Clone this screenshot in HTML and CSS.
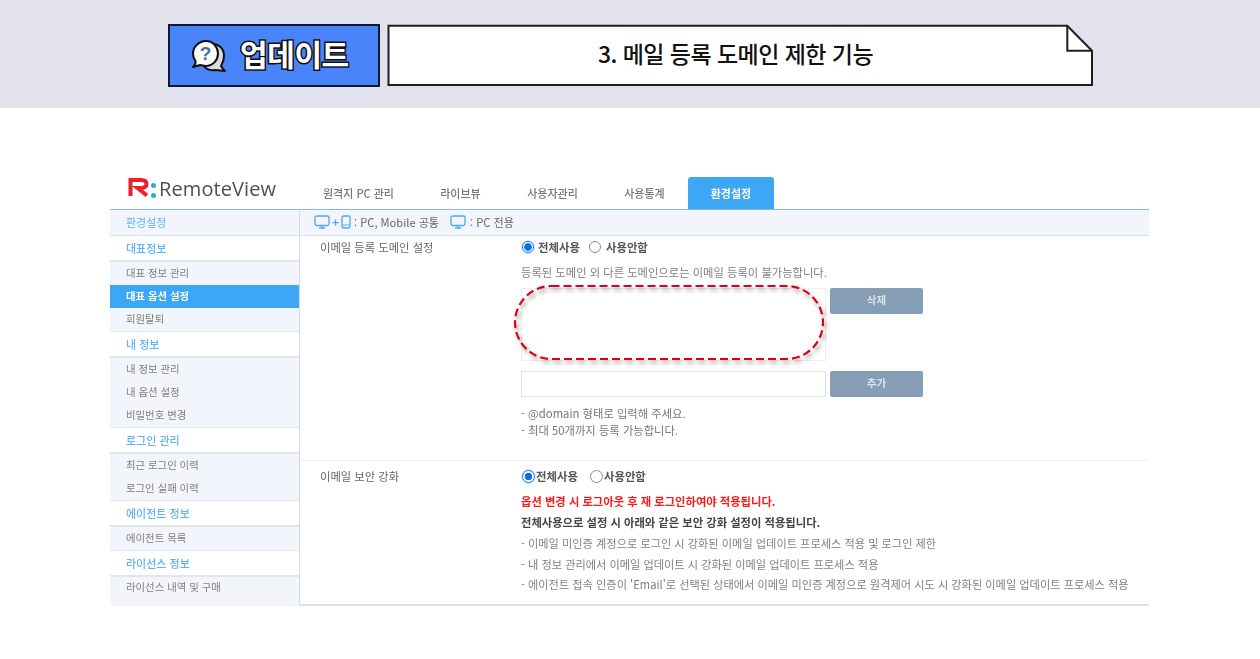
FILE: index.html
```html
<!DOCTYPE html>
<html lang="ko">
<head>
<meta charset="utf-8">
<title>업데이트</title>
<link rel="stylesheet" href="styles.css">
</head>
<body>
<header class="hero">
  <div class="badge">
    <svg class="badge-icon" width="36" height="34" viewBox="0 0 36 34">
      <path d="M20 5 C28 4 33 10 33 17 C33 22 31 25 30 27 C31 29 33 31 34 32 L24 31 C18 32 14 29 12 26 Z" fill="#dcdcdc" stroke="#111" stroke-width="2" stroke-linejoin="round"/>
      <path d="M15 2 C22 2 27 8 27 14.500 C27 21 22 27 15 27 C12 27 10 26 9 26 L2 28 C4 26 5 24 4.500 22 C3 20 2 17 2 14.500 C2 8 8 2 15 2 Z" fill="#fff" stroke="#111" stroke-width="2" stroke-linejoin="round"/>
      <text class="q-mark" x="14.500" y="21" text-anchor="middle">?</text>
    </svg>
    <span class="badge-text">업데이트</span>
  </div>
  <div class="note">
    <svg class="note-shape" width="708" height="63" viewBox="0 0 708 63">
      <path d="M1.500 1.700 H680.300 L705 26.700 V61 H1.500 Z" fill="#fff" stroke="#1e1e22" stroke-width="2"/>
      <path d="M680.300 1.700 V26.700 H705" fill="none" stroke="#1e1e22" stroke-width="2"/>
    </svg>
    <span class="note-text">3. 메일 등록 도메인 제한 기능</span>
  </div>
</header>

<section class="app">
  <div class="soft">
    <div class="topbar">
      <div class="logo">
        <svg width="24" height="20" viewBox="0 0 24 20">
          <path d="M2.500 19 V3 H13 Q18.500 3 18.500 7 Q18.500 11 12 11 H9.500 L19 18.500" fill="none" stroke="#e8222e" stroke-width="4" stroke-linejoin="miter"/>
        </svg>
        <span class="logo-colon"><i></i><i></i></span>
        <span class="logo-text">RemoteView</span>
      </div>
      <nav class="tabs">
        <a class="tab t1">원격지 PC 관리</a>
        <a class="tab t2">라이브뷰</a>
        <a class="tab t3">사용자관리</a>
        <a class="tab t4">사용통계</a>
        <a class="tab active">환경설정</a>
      </nav>
    </div>
    <div class="panel">
      <aside class="side">
        <div class="side-title">환경설정</div>
        <div class="group">대표정보</div>
        <ul class="list">
          <li>대표 정보 관리</li>
          <li class="current">대표 옵션 설정</li>
          <li>회원탈퇴</li>
        </ul>
        <div class="group">내 정보</div>
        <ul class="list">
          <li>내 정보 관리</li>
          <li>내 옵션 설정</li>
          <li>비밀번호 변경</li>
        </ul>
        <div class="group">로그인 관리</div>
        <ul class="list">
          <li>최근 로그인 이력</li>
          <li>로그인 실패 이력</li>
        </ul>
        <div class="group">에이전트 정보</div>
        <ul class="list">
          <li>에이전트 목록</li>
        </ul>
        <div class="group">라이선스 정보</div>
        <ul class="list last">
          <li>라이선스 내역 및 구매</li>
        </ul>
      </aside>
      <main class="main">
        <div class="legend">
          <svg width="16" height="14" viewBox="0 0 16 14"><rect x="1" y="1" width="14" height="9.500" rx="1.500" fill="none" stroke="#4fa8ee" stroke-width="1.300"/><path d="M5 13 H11 M8 10.500 V13" stroke="#4fa8ee" stroke-width="1.300"/></svg>
          <span class="plus">+</span>
          <svg width="10" height="14" viewBox="0 0 10 14"><rect x="1" y="1" width="8" height="12" rx="1.500" fill="none" stroke="#4fa8ee" stroke-width="1.300"/><path d="M1 10 H9" stroke="#4fa8ee" stroke-width="1"/></svg>
          <span class="legend-a">: PC, Mobile 공통</span>
          <svg width="16" height="14" viewBox="0 0 16 14"><rect x="1" y="1" width="14" height="9.500" rx="1.500" fill="none" stroke="#4fa8ee" stroke-width="1.300"/><path d="M5 13 H11 M8 10.500 V13" stroke="#4fa8ee" stroke-width="1.300"/></svg>
          <span class="legend-b">: PC 전용</span>
        </div>
        <div class="row row-one">
          <div class="label">이메일 등록 도메인 설정</div>
          <div class="field">
            <div class="radios">
              <span class="radio on"></span><b>전체사용</b>
              <span class="radio gap"></span><b>사용안함</b>
            </div>
            <p class="help">등록된 도메인 외 다른 도메인으로는 이메일 등록이 불가능합니다.</p>
            <div class="line">
              <div class="box tall"></div>
              <button class="btn">삭제</button>
            </div>
            <div class="line second">
              <div class="box"></div>
              <button class="btn">추가</button>
            </div>
            <p class="hint first">- @domain 형태로 입력해 주세요.</p>
            <p class="hint">- 최대 50개까지 등록 가능합니다.</p>
          </div>
        </div>
        <div class="row row-two">
          <div class="label">이메일 보안 강화</div>
          <div class="field">
            <div class="radios tight">
              <span class="radio on big"></span><b>전체사용</b>
              <span class="radio big gap2"></span><b>사용안함</b>
            </div>
            <p class="warn">옵션 변경 시 로그아웃 후 재 로그인하여야 적용됩니다.</p>
            <p class="strong">전체사용으로 설정 시 아래와 같은 보안 강화 설정이 적용됩니다.</p>
            <p class="item">- 이메일 미인증 계정으로 로그인 시 강화된 이메일 업데이트 프로세스 적용 및 로그인 제한</p>
            <p class="item">- 내 정보 관리에서 이메일 업데이트 시 강화된 이메일 업데이트 프로세스 적용</p>
            <p class="item">- 에이전트 접속 인증이 'Email'로 선택된 상태에서 이메일 미인증 계정으로 원격제어 시도 시 강화된 이메일 업데이트 프로세스 적용</p>
          </div>
        </div>
      </main>
    </div>
  </div>
  <svg class="dash" width="316" height="82" viewBox="0 0 316 82">
    <rect x="3" y="3" width="308" height="73" rx="36.500" fill="none" stroke="#dc0019" stroke-width="2.200" stroke-dasharray="8 4"/>
  </svg>
</section>
</body>
</html>
```

FILE: styles.css
```css
* { box-sizing: border-box; }
html, body { margin: 0; padding: 0; background: #fff; }
body {
  width: 1260px;
  height: 659px;
  overflow: hidden;
  font-family: "Noto Sans CJK KR", "Noto Sans", sans-serif;
  color: #666;
}
p { margin: 0; }
ul { margin: 0; padding: 0; list-style: none; }

/* hero band */
.hero {
  height: 108px;
  background: #e1e2eb;
  padding: 24px 0 0 168px;
  display: flex;
  align-items: flex-start;
  gap: 7px;
}
.badge {
  width: 212px;
  height: 63px;
  background: #4a84fb;
  border: 2px solid #10183a;
  display: flex;
  align-items: center;
  padding-left: 21px;
  gap: 13px;
}
.badge-icon { flex: none; margin-top: 1px; }
.q-mark { font: 700 19px "Liberation Sans", sans-serif; fill: #4a6fa5; }
.badge-text {
  font-size: 30px;
  font-weight: 700;
  color: #fff;
  -webkit-text-stroke: 3px #111;
  paint-order: stroke fill;
  letter-spacing: -0.4px;
  line-height: 1;
  margin-top: -6px;
}
.note {
  position: relative;
  width: 708px;
  height: 63px;
  display: flex;
  align-items: center;
  justify-content: center;
  padding: 0 11px 4px 0;
}
.note-shape { position: absolute; left: 0; top: 0; }
.note-text {
  position: relative;
  font-size: 23px;
  font-weight: 500;
  color: #111;
  letter-spacing: -0.55px;
  line-height: 1;
}

/* app screenshot */
.app {
  position: relative;
  width: 1039px;
  margin: 64px 0 0 110px;
}
.soft { filter: blur(0.5px); }
.topbar {
  height: 37px;
  display: flex;
  align-items: flex-end;
}
.logo {
  width: 190px;
  height: 37px;
  display: flex;
  align-items: flex-start;
  padding: 5px 0 0 18px;
}
.logo-colon {
  display: flex;
  flex-direction: column;
  gap: 5px;
  margin: 6px 3px 0 -1px;
}
.logo-colon i {
  display: block;
  width: 5px;
  height: 5px;
  border-radius: 50%;
  background: #22a9e8;
}
.logo-text {
  font: 500 20px/24px "Open Sans", sans-serif;
  color: #505054;
  letter-spacing: 0.1px;
}
.tabs { display: flex; height: 32px; align-items: stretch; }
.tab {
  font-size: 11px;
  font-weight: 500;
  color: #777;
  display: flex;
  align-items: center;
  justify-content: center;
}
.t1 { width: 117px; }
.t2 { width: 87px; }
.t3 { width: 97px; }
.t4 { width: 87px; }
.tab.active {
  width: 86px;
  background: #3ca8f5;
  color: #fff;
  font-weight: 700;
  border-radius: 3px 3px 0 0;
}
.panel {
  display: flex;
  height: 397px;
  border-top: 1px solid #7dbdf3;
}
.side {
  width: 190px;
  flex: none;
  display: flex;
  flex-direction: column;
  background: #f2f5fc;
  border-right: 1px solid #d8dde5;
  font-size: 10.400px;
}
.side-title {
  height: 26px;
  line-height: 25px;
  padding-left: 16px;
  color: #5fb4f6;
  font-size: 11px;
  border-bottom: 1px solid #dfe2e8;
}
.group {
  height: 26px;
  line-height: 25px;
  padding-left: 16px;
  background: #fff;
  color: #5fb4f6;
  font-size: 11px;
  font-weight: 500;
  border-bottom: 2px solid #e3e5ea;
}
.list + .group {
  height: 27px;
  border-top: 1px solid #e3e5ea;
}
.list li {
  height: 23px;
  line-height: 22px;
  padding-left: 16px;
  color: #808080;
}
.list li.current {
  background: #3ca8f5;
  color: #fff;
  font-weight: 700;
}
.list.last { flex: 1; }
.list.last li { margin-top: -1px; }

.main { flex: 1; display: flex; flex-direction: column; border-bottom: 2px solid #dcdfe8; font-size: 11.300px; }
.legend {
  height: 26px;
  background: #f2f5fc;
  border-bottom: 1px solid #dfe2e8;
  display: flex;
  align-items: center;
  padding: 0 0 2px 14px;
  gap: 2px;
  color: #666;
  font-size: 11.100px;
}
.plus { color: #4fa8ee; font-weight: 700; font-size: 12px; }
.legend-a { margin: 0 9px 0 1px; }
.legend-b { margin-left: 2px; }
.row {
  display: grid;
  grid-template-columns: 201px 1fr;
  padding-left: 20px;
}
.row-one { height: 225px; border-bottom: 1px solid #eeeff2; padding-top: 2px; }
.row-two { flex: 1; padding-top: 6px; }
.label { color: #666; font-size: 11.300px; line-height: 18px; }
.radios {
  display: flex;
  align-items: center;
  height: 18px;
  color: #555;
  font-size: 11.400px;
}
.radios b { font-weight: 700; }
.radio {
  width: 12px;
  height: 12px;
  border-radius: 50%;
  border: 1px solid #8a8a8a;
  background: #fff;
  margin: 0 4px 0 1px;
  flex: none;
}
.radio.on {
  border-color: #1a73e8;
  box-shadow: 0 0 0 1px #cfe3fb;
  background: radial-gradient(circle, #0a6fe6 0 3.500px, #fff 4px);
}
.radio.gap { margin: 0 5px 0 9px; }
.radios.tight .radio { margin-right: 1px; }
.radio.big { width: 13px; height: 13px; }
.radio.gap2 { margin-left: 12px; }
.help { margin-top: 7px; line-height: 18px; color: #808080; }
.line { display: flex; gap: 4px; margin-top: 7px; }
.line.second { margin-top: 10px; }
.box {
  width: 305px;
  height: 26px;
  background: #fff;
  border: 1px solid #dde3ee;
}
.box.tall { height: 73px; border-color: #eeeeee; }
.btn {
  width: 93px;
  height: 26px;
  border: 0;
  padding: 0 0 3px;
  border-radius: 2px;
  background: #859db5;
  color: #dbe3ea;
  font: 700 10.500px "Noto Sans CJK KR", sans-serif;
}
.hint { line-height: 17px; color: #777; }
.hint.first { margin-top: 8px; }
.warn { margin-top: 6px; color: #ff1a1a; font-weight: 700; line-height: 20.500px; }
.strong { color: #444; font-weight: 700; line-height: 20.500px; margin-bottom: 1px; }
.item { color: #808080; font-size: 11.200px; line-height: 20.500px; white-space: nowrap; }

/* red dashed callout, drawn over the address list */
.dash {
  position: absolute;
  left: 402px;
  top: 111px;
  overflow: visible;
  filter: drop-shadow(2px 3px 2px rgba(0, 0, 0, 0.45));
}
```
